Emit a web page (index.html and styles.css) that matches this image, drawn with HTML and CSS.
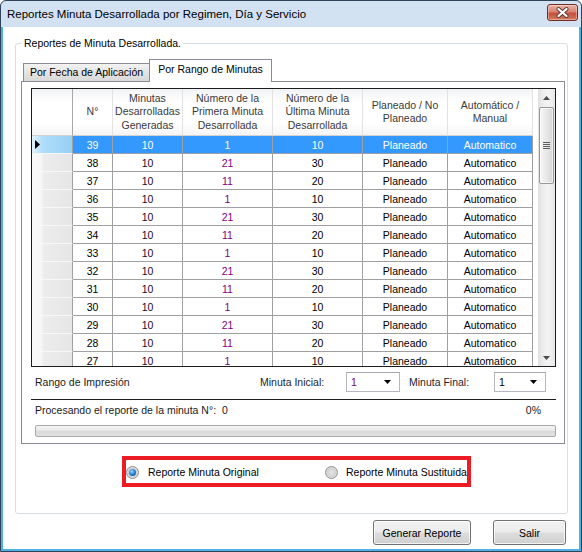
FILE: index.html
```html
<!DOCTYPE html>
<html lang="es">
<head>
<meta charset="utf-8">
<title>Reportes Minuta Desarrollada por Regimen, Día y Servicio</title>
<link rel="stylesheet" href="styles.css">
</head>
<body>
<div class="window">
  <div class="titlebar">
    <span class="title">Reportes Minuta Desarrollada por Regimen, Día y Servicio</span>
    <button class="close" aria-label="Cerrar">
      <svg width="13" height="11" viewBox="0 0 13 11">
        <path d="M2.5 2 L10.5 9 M10.5 2 L2.5 9" stroke="#5b3a36" stroke-width="4" stroke-linecap="round"/>
        <path d="M2.5 2 L10.5 9 M10.5 2 L2.5 9" stroke="#ffffff" stroke-width="2.2" stroke-linecap="round"/>
      </svg>
    </button>
  </div>
  <div class="client">
    <fieldset class="group">
      <legend>Reportes de Minuta Desarrollada.</legend>
      <div class="tabs">
        <div class="tab">Por Fecha de Aplicación</div>
        <div class="tab active">Por Rango de Minutas</div>
      </div>
      <div class="tab-panel">
        <div class="grid">
          <div class="grid-body">
            <table class="data">
              <colgroup>
                <col class="c-rh"><col class="c-n"><col class="c-min"><col class="c-num"><col class="c-num"><col class="c-pl"><col class="c-pl">
              </colgroup>
              <thead>
                <tr>
                  <th class="rh"><div class="h"></div></th>
                  <th><div class="h">N°</div></th>
                  <th><div class="h">Minutas<br>Desarrolladas<br>Generadas</div></th>
                  <th><div class="h">Número de la<br>Primera Minuta<br>Desarrollada</div></th>
                  <th><div class="h">Número de la<br>Última Minuta<br>Desarrollada</div></th>
                  <th><div class="h">Planeado / No<br>Planeado</div></th>
                  <th><div class="h">Automático /<br>Manual</div></th>
                </tr>
              </thead>
              <tbody>
                <tr class="sel"><td class="rh"><svg class="arrow" width="5" height="9" viewBox="0 0 5 9"><path d="M0 0 L5 4.5 L0 9 Z" fill="#000"/></svg></td><td>39</td><td class="gen">10</td><td class="pri">1</td><td>10</td><td>Planeado</td><td>Automatico</td></tr>
                <tr><td class="rh"></td><td>38</td><td class="gen">10</td><td class="pri">21</td><td>30</td><td>Planeado</td><td>Automatico</td></tr>
                <tr><td class="rh"></td><td>37</td><td class="gen">10</td><td class="pri">11</td><td>20</td><td>Planeado</td><td>Automatico</td></tr>
                <tr><td class="rh"></td><td>36</td><td class="gen">10</td><td class="pri">1</td><td>10</td><td>Planeado</td><td>Automatico</td></tr>
                <tr><td class="rh"></td><td>35</td><td class="gen">10</td><td class="pri">21</td><td>30</td><td>Planeado</td><td>Automatico</td></tr>
                <tr><td class="rh"></td><td>34</td><td class="gen">10</td><td class="pri">11</td><td>20</td><td>Planeado</td><td>Automatico</td></tr>
                <tr><td class="rh"></td><td>33</td><td class="gen">10</td><td class="pri">1</td><td>10</td><td>Planeado</td><td>Automatico</td></tr>
                <tr><td class="rh"></td><td>32</td><td class="gen">10</td><td class="pri">21</td><td>30</td><td>Planeado</td><td>Automatico</td></tr>
                <tr><td class="rh"></td><td>31</td><td class="gen">10</td><td class="pri">11</td><td>20</td><td>Planeado</td><td>Automatico</td></tr>
                <tr><td class="rh"></td><td>30</td><td class="gen">10</td><td class="pri">1</td><td>10</td><td>Planeado</td><td>Automatico</td></tr>
                <tr><td class="rh"></td><td>29</td><td class="gen">10</td><td class="pri">21</td><td>30</td><td>Planeado</td><td>Automatico</td></tr>
                <tr><td class="rh"></td><td>28</td><td class="gen">10</td><td class="pri">11</td><td>20</td><td>Planeado</td><td>Automatico</td></tr>
                <tr><td class="rh"></td><td>27</td><td class="gen">10</td><td class="pri">1</td><td>10</td><td>Planeado</td><td>Automatico</td></tr>
              </tbody>
            </table>
          </div>
          <div class="vscroll">
            <div class="sb-btn"><svg width="7" height="4" viewBox="0 0 7 4"><path d="M0 4 L3.5 0 L7 4 Z" fill="#4a4a4a"/></svg></div>
            <div class="sb-thumb">
              <svg width="7" height="7" viewBox="0 0 7 7"><path d="M0 0.5 H7 M0 2.5 H7 M0 4.5 H7 M0 6.5 H7" stroke="#5e5e5e" stroke-width="1"/></svg>
            </div>
            <div class="sb-track"></div>
            <div class="sb-btn"><svg width="7" height="4" viewBox="0 0 7 4"><path d="M0 0 L7 0 L3.5 4 Z" fill="#4a4a4a"/></svg></div>
          </div>
        </div>

        <div class="range-row">
          <span class="range-title">Rango de Impresión</span>
          <span class="lbl lbl-ini">Minuta Inicial:</span>
          <div class="combo combo-ini"><span class="combo-val purple">1</span><svg width="7" height="4" viewBox="0 0 7 4"><path d="M0 0 L7 0 L3.5 4 Z" fill="#000"/></svg></div>
          <span class="lbl lbl-fin">Minuta Final:</span>
          <div class="combo combo-fin"><span class="combo-val">1</span><svg width="7" height="4" viewBox="0 0 7 4"><path d="M0 0 L7 0 L3.5 4 Z" fill="#000"/></svg></div>
        </div>
        <div class="sep"></div>
        <div class="progress-row">
          <span>Procesando el reporte de la minuta N°:&nbsp; 0</span>
          <span>0%</span>
        </div>
        <div class="progress"></div>
      </div>

      <div class="radio-box">
        <label class="radio radio-orig"><span class="rb on"></span><span>Reporte Minuta Original</span></label>
        <label class="radio radio-sust"><span class="rb"></span><span>Reporte Minuta Sustituida</span></label>
      </div>
    </fieldset>

    <div class="buttons">
      <button class="btn btn-gen">Generar Reporte</button>
      <button class="btn btn-salir">Salir</button>
    </div>
  </div>
</div>
</body>
</html>
```

FILE: styles.css
```css
* { box-sizing: border-box; }
html, body { margin: 0; padding: 0; }
body {
  width: 582px;
  height: 552px;
  overflow: hidden;
  background: #ffffff;
  font-family: "Liberation Sans", Arial, sans-serif;
  font-size: 10.5px;
  color: #000;
}

.window {
  width: 582px;
  height: 552px;
  display: flex;
  flex-direction: column;
  border: 1px solid #2e4259;
  border-radius: 6px 6px 0 0;
  background: linear-gradient(#d3e2f2, #bfd4eb);
}

.titlebar {
  height: 26px;
  display: flex;
  align-items: center;
  padding-left: 6px;
}
.title {
  font-size: 11.5px;
  color: #000;
  margin-top: -1px;
}
.close {
  margin-left: auto;
  margin-right: 3px;
  align-self: flex-start;
  margin-top: 3px;
  width: 31px;
  height: 17px;
  padding: 0;
  border: 1px solid #6e2e24;
  border-radius: 3px;
  background: linear-gradient(#eab3a8 0%, #d98170 45%, #c5503b 55%, #d27a5e 100%);
  box-shadow: inset 0 0 0 1px rgba(255, 255, 255, 0.35);
  display: flex;
  align-items: center;
  justify-content: center;
}

.client {
  flex: 1;
  display: flex;
  flex-direction: column;
  background: #ffffff;
  border: 2px solid #4fb0e2;
  border-top: none;
}

/* group box */
.group {
  margin: 10px 11px 0 12px;
  padding: 9px 2px 26px 5px;
  border: 1px solid #d5dfe5;
  border-radius: 3px;
  min-width: 0;
}
.group legend {
  padding: 0 2px 0 3px;
  line-height: 13px;
  font-size: 10.5px;
}

/* tabs */
.tabs {
  display: flex;
  align-items: flex-end;
  padding-left: 2px;
  margin-bottom: -1px;
  position: relative;
  z-index: 1;
}
.tab {
  width: 127px;
  height: 19px;
  border: 1px solid #898c95;
  background: linear-gradient(#f3f3f3, #e3e3e3 50%, #d9d9d9);
  display: flex;
  align-items: center;
  justify-content: center;
  line-height: 13px;
  white-space: nowrap;
}
.tab.active {
  width: 123px;
  height: 23px;
  margin-left: -1px;
  border-bottom: none;
  background: #ffffff;
  padding-bottom: 3px;
  position: relative;
  z-index: 1;
}

.tab-panel {
  border: 1px solid #898c95;
  padding: 6px 8px 6px 9px;
}

/* grid */
.grid {
  display: flex;
  height: 279px;
  border: 1px solid #1c1c1c;
  background: #ffffff;
}
.grid-body {
  width: 501px;
  overflow: hidden;
}
table.data {
  border-collapse: separate;
  border-spacing: 0;
  table-layout: fixed;
  width: 501px;
}
.c-rh { width: 41px; }
.c-n { width: 40px; }
.c-min { width: 70px; }
.c-num { width: 90px; }
.c-pl { width: 85px; }

.data th {
  padding: 0;
  font-weight: normal;
  color: #3a3a3a;
  border-right: 1px solid #e2e2e2;
  border-bottom: 1px solid #d2d2d2;
  background: linear-gradient(#f1f2f4 0%, #ffffff 28%, #ffffff 75%, #f4f4f4 100%);
}
.data th .h {
  height: 46px;
  display: flex;
  align-items: center;
  justify-content: center;
  text-align: center;
  line-height: 13.5px;
  white-space: nowrap;
}
.data th.rh {
  border-right: 1px solid #a8a8a8;
}
.data td {
  padding: 1px 0 0 0;
  line-height: 16px;
  height: 18px;
  text-align: center;
  white-space: nowrap;
  border-right: 1px solid #a0a0a0;
  border-bottom: 1px solid #a0a0a0;
}
.data td.rh {
  text-align: left;
  padding: 0 0 0 3px;
  border-right: 1px solid #a0a0a0;
  border-bottom: 1px solid #f7f7f7;
  background: linear-gradient(to right, #fafafa 0%, #f7f7f7 22%, #ececec 30%, #e6e6e8 100%);
}
.data td.gen { color: #24062e; }
.data td.pri { color: #800080; }

.data tr.sel td {
  background: #3399ff;
  color: #ffffff;
}
.data tr.sel td.rh {
  background: linear-gradient(to right, #e4f3fd 0%, #b2def9 25%, #95d0f6 100%);
}
.arrow { display: block; }

/* scrollbar */
.vscroll {
  width: 17px;
  margin-left: auto;
  display: flex;
  flex-direction: column;
  background: linear-gradient(to right, #e0e0e0, #efefef 35%, #f3f3f3 60%, #e8e8e8);
}
.sb-btn {
  height: 17px;
  display: flex;
  align-items: center;
  justify-content: center;
}
.sb-thumb {
  margin: 1px 1px 0 1px;
  height: 77px;
  border: 1px solid #979797;
  border-radius: 2px;
  background: linear-gradient(to right, #f6f6f6, #e8e8e8 50%, #d6d6d6);
  box-shadow: inset 0 0 0 1px rgba(255, 255, 255, 0.6);
  display: flex;
  align-items: center;
  justify-content: center;
}
.sb-track { flex: 1; }

/* range row */
.range-row {
  display: flex;
  align-items: center;
  height: 20px;
  margin-top: 5px;
}
.range-title {
  flex: 1;
  padding-left: 4px;
  color: #1a1a1a;
}
.lbl { color: #1e1e2e; white-space: nowrap; }
.lbl-ini { width: 86px; }
.lbl-fin { width: 85px; margin-left: 9px; }
.combo {
  height: 20px;
  border: 1px solid #b5b8bf;
  border-top-color: #a3a6ad;
  background: #ffffff;
  display: flex;
  align-items: center;
  padding: 0 8px 0 4px;
}
.combo-ini { width: 54px; }
.combo-fin { width: 52px; margin-right: 10px; }
.combo-val { flex: 1; }
.purple { color: #800080; }

.sep {
  margin-top: 7px;
  border-top: 1px solid #1c1c1c;
}
.progress-row {
  display: flex;
  justify-content: space-between;
  margin-top: 4px;
  line-height: 13px;
  padding: 0 15px 0 4px;
  color: #1a1a1a;
}
.progress {
  margin: 8px 0 0 4px;
  height: 12px;
  border: 1px solid #a9a9a9;
  border-radius: 2px;
  background: linear-gradient(#f4f4f4 0%, #e9e9e9 45%, #d9d9d9 55%, #e2e2e2 100%);
}

/* radio box */
.radio-box {
  margin: 12px 0 0 101px;
  width: 349px;
  height: 31px;
  border: 4px solid #ed1c24;
  display: flex;
  align-items: center;
  padding-top: 1px;
}
.radio {
  display: flex;
  align-items: center;
  white-space: nowrap;
}
.radio-orig { flex: 0 0 199px; }
.radio-sust { flex: 0 0 auto; }
.rb {
  width: 13px;
  height: 13px;
  border-radius: 50%;
  border: 1px solid #8e8f8f;
  background: radial-gradient(circle at 50% 50%, #e6e6e6 0%, #d2d2d2 55%, #f4f4f4 100%);
  display: flex;
  align-items: center;
  justify-content: center;
  margin-right: 9px;
  flex: 0 0 13px;
}
.radio-sust .rb { margin-right: 8px; }
.rb.on::after {
  content: "";
  width: 7px;
  height: 7px;
  border-radius: 50%;
  background: radial-gradient(circle at 40% 35%, #9fdcff 0%, #2f86d8 45%, #0d3f80 100%);
}

/* buttons */
.buttons {
  display: flex;
  justify-content: flex-end;
  gap: 22px;
  margin-top: 6px;
  padding-right: 13px;
}
.btn {
  height: 25px;
  padding: 0;
  font: inherit;
  color: #000;
  border: 1px solid #707070;
  border-radius: 3px;
  background: linear-gradient(#f2f2f2 0%, #ebebeb 48%, #dddddd 52%, #cfcfcf 100%);
  box-shadow: inset 0 0 0 1px rgba(255, 255, 255, 0.75);
}
.btn-gen { width: 98px; }
.btn-salir { width: 73px; }
```
